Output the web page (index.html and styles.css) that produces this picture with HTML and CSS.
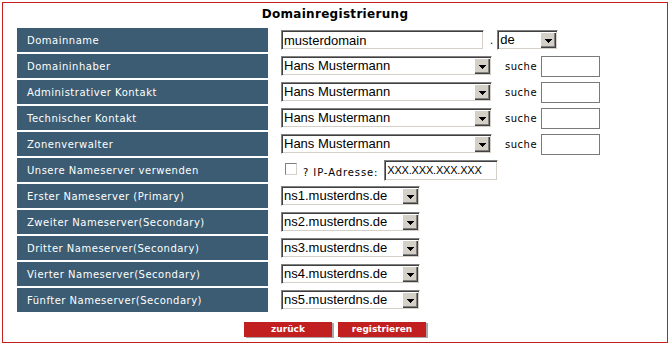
FILE: index.html
```html
<!DOCTYPE html>
<html lang="de">
<head>
    <meta charset="UTF-8">
    <title>Domainregistrierung</title>
    <link rel="stylesheet" href="styles.css">
</head>
<body>
    <div class="panel">
        <h1 class="panel-title">Domainregistrierung</h1>

        <form class="reg-form">
            <div class="rows">
                <div class="row">
                    <div class="label">Domainname</div>
                    <div class="field">
                        <input class="sunken domain-input" type="text" value="musterdomain">
                        <span class="dot">.</span>
                        <div class="combo tld">
                            <select><option>de</option></select>
                            <span class="combo-btn"><svg width="7" height="4" viewBox="0 0 7 4"><polygon points="0,0 7,0 3.5,4" fill="#000"/></svg></span>
                        </div>
                    </div>
                </div>

                <div class="row">
                    <div class="label">Domaininhaber</div>
                    <div class="field">
                        <div class="combo contact">
                            <select><option>Hans Mustermann</option></select>
                            <span class="combo-btn"><svg width="7" height="4" viewBox="0 0 7 4"><polygon points="0,0 7,0 3.5,4" fill="#000"/></svg></span>
                        </div>
                        <span class="search-label">suche</span>
                        <input class="search-box" type="text">
                    </div>
                </div>

                <div class="row">
                    <div class="label">Administrativer Kontakt</div>
                    <div class="field">
                        <div class="combo contact">
                            <select><option>Hans Mustermann</option></select>
                            <span class="combo-btn"><svg width="7" height="4" viewBox="0 0 7 4"><polygon points="0,0 7,0 3.5,4" fill="#000"/></svg></span>
                        </div>
                        <span class="search-label">suche</span>
                        <input class="search-box" type="text">
                    </div>
                </div>

                <div class="row">
                    <div class="label">Technischer Kontakt</div>
                    <div class="field">
                        <div class="combo contact">
                            <select><option>Hans Mustermann</option></select>
                            <span class="combo-btn"><svg width="7" height="4" viewBox="0 0 7 4"><polygon points="0,0 7,0 3.5,4" fill="#000"/></svg></span>
                        </div>
                        <span class="search-label">suche</span>
                        <input class="search-box" type="text">
                    </div>
                </div>

                <div class="row">
                    <div class="label">Zonenverwalter</div>
                    <div class="field">
                        <div class="combo contact">
                            <select><option>Hans Mustermann</option></select>
                            <span class="combo-btn"><svg width="7" height="4" viewBox="0 0 7 4"><polygon points="0,0 7,0 3.5,4" fill="#000"/></svg></span>
                        </div>
                        <span class="search-label">suche</span>
                        <input class="search-box" type="text">
                    </div>
                </div>

                <div class="row">
                    <div class="label">Unsere Nameserver verwenden</div>
                    <div class="field">
                        <input class="check" type="checkbox">
                        <span class="ip-label">? IP-Adresse:</span>
                        <input class="sunken ip-input" type="text" value="XXX.XXX.XXX.XXX">
                    </div>
                </div>

                <div class="row">
                    <div class="label">Erster Nameserver (Primary)</div>
                    <div class="field">
                        <div class="combo ns">
                            <select><option>ns1.musterdns.de</option></select>
                            <span class="combo-btn"><svg width="7" height="4" viewBox="0 0 7 4"><polygon points="0,0 7,0 3.5,4" fill="#000"/></svg></span>
                        </div>
                    </div>
                </div>

                <div class="row">
                    <div class="label">Zweiter Nameserver(Secondary)</div>
                    <div class="field">
                        <div class="combo ns">
                            <select><option>ns2.musterdns.de</option></select>
                            <span class="combo-btn"><svg width="7" height="4" viewBox="0 0 7 4"><polygon points="0,0 7,0 3.5,4" fill="#000"/></svg></span>
                        </div>
                    </div>
                </div>

                <div class="row">
                    <div class="label">Dritter Nameserver(Secondary)</div>
                    <div class="field">
                        <div class="combo ns">
                            <select><option>ns3.musterdns.de</option></select>
                            <span class="combo-btn"><svg width="7" height="4" viewBox="0 0 7 4"><polygon points="0,0 7,0 3.5,4" fill="#000"/></svg></span>
                        </div>
                    </div>
                </div>

                <div class="row">
                    <div class="label">Vierter Nameserver(Secondary)</div>
                    <div class="field">
                        <div class="combo ns">
                            <select><option>ns4.musterdns.de</option></select>
                            <span class="combo-btn"><svg width="7" height="4" viewBox="0 0 7 4"><polygon points="0,0 7,0 3.5,4" fill="#000"/></svg></span>
                        </div>
                    </div>
                </div>

                <div class="row">
                    <div class="label">Fünfter Nameserver(Secondary)</div>
                    <div class="field">
                        <div class="combo ns">
                            <select><option>ns5.musterdns.de</option></select>
                            <span class="combo-btn"><svg width="7" height="4" viewBox="0 0 7 4"><polygon points="0,0 7,0 3.5,4" fill="#000"/></svg></span>
                        </div>
                    </div>
                </div>
            </div>

            <div class="actions">
                <button type="button" class="btn">zurück</button>
                <button type="submit" class="btn">registrieren</button>
            </div>
        </form>
    </div>
</body>
</html>
```

FILE: styles.css
```css
:root {
    --label-bg: #3b5c72;
    --frame-red: #c42020;
    --button-red: #c22020;
    --win-face: #d4d0c8;
    --win-shadow: #808080;
    --win-dark: #404040;
}

body {
    margin: 0;
    background: #fff;
    font-family: "DejaVu Sans", Verdana, sans-serif;
}

.panel {
    margin: 2px;
    width: 666px;
    height: 341px;
    box-sizing: border-box;
    border: 1px solid var(--frame-red);
}

.panel-title {
    margin: 4px 0 6px;
    font-size: 12px;
    line-height: 15px;
    font-weight: bold;
    letter-spacing: 0.3px;
    text-align: center;
    color: #000;
}

.rows {
    display: flex;
    flex-direction: column;
    gap: 2px;
    padding-left: 14px;
}

.row {
    display: grid;
    grid-template-columns: 251px 1fr;
    column-gap: 13px;
    height: 24px;
}

.label {
    display: flex;
    align-items: center;
    padding-left: 10px;
    background: var(--label-bg);
    color: #fff;
    font-size: 10px;
    letter-spacing: 0.5px;
    white-space: nowrap;
}

.field {
    display: flex;
    align-items: center;
}

/* classic sunken controls */
.sunken,
.combo {
    box-sizing: border-box;
    height: 20px;
    border: 1px solid;
    border-color: var(--win-shadow) #fff #fff var(--win-shadow);
    box-shadow: inset 1px 1px 0 var(--win-dark), inset -1px -1px 0 var(--win-face);
    background: #fff;
}

.sunken {
    padding: 0 2px;
    font-family: "Liberation Sans", Arial, sans-serif;
    font-size: 13px;
    color: #000;
    outline: none;
}

.domain-input {
    width: 203px;
}

.dot {
    margin: 0 4px 0 6px;
    font-size: 10px;
    align-self: flex-end;
    padding-bottom: 6px;
}

.combo {
    display: flex;
    padding: 1px;
}

.combo select {
    flex: 1;
    min-width: 0;
    height: 16px;
    margin: 0;
    padding: 0 0 0 1px;
    border: none;
    background: #fff;
    appearance: none;
    -webkit-appearance: none;
    font-family: "Liberation Sans", Arial, sans-serif;
    font-size: 13px;
    line-height: 16px;
    color: #000;
    outline: none;
}

.combo-btn {
    display: flex;
    align-items: center;
    justify-content: center;
    width: 16px;
    height: 16px;
    background: var(--win-face);
    box-shadow: inset 1px 1px 0 #fff, inset -1px -1px 0 var(--win-dark), inset -2px -2px 0 var(--win-shadow);
}

.combo-btn svg {
    shape-rendering: crispEdges;
    margin-top: 1px;
}

.tld {
    width: 61px;
}

.contact {
    width: 211px;
}

.ns {
    width: 139px;
}

.search-label {
    margin: 0 4px 0 13px;
    font-size: 10px;
    letter-spacing: 0.5px;
    color: #000;
}

.search-box {
    box-sizing: border-box;
    width: 59px;
    height: 21px;
    margin: 0;
    border: 1px solid #7a7a7a;
    background: #fff;
    outline: none;
}

.check {
    appearance: none;
    -webkit-appearance: none;
    box-sizing: border-box;
    width: 12px;
    height: 12px;
    margin: 0 6px 0 4px;
    align-self: flex-start;
    margin-top: 5px;
    border: 1px solid;
    border-color: var(--win-shadow) var(--win-face) var(--win-face) var(--win-shadow);
    background: #fff;
}

.ip-label {
    margin-top: 5px;
    font-size: 10px;
    letter-spacing: 0.9px;
    color: #000;
    white-space: nowrap;
}

.ip-input {
    width: 114px;
    height: 21px;
    margin-left: 6px;
    font-size: 11px;
    letter-spacing: -0.2px;
}

.actions {
    display: flex;
    justify-content: center;
    gap: 6px;
    margin-top: 10px;
}

.btn {
    width: 88px;
    height: 15px;
    padding: 0;
    border: none;
    border-radius: 0;
    background: var(--button-red);
    box-shadow: 2px 1px 0 #a9a9a9;
    color: #fff;
    font-family: "DejaVu Sans", Verdana, sans-serif;
    font-size: 9px;
    font-weight: bold;
    line-height: 15px;
    cursor: pointer;
}
```
